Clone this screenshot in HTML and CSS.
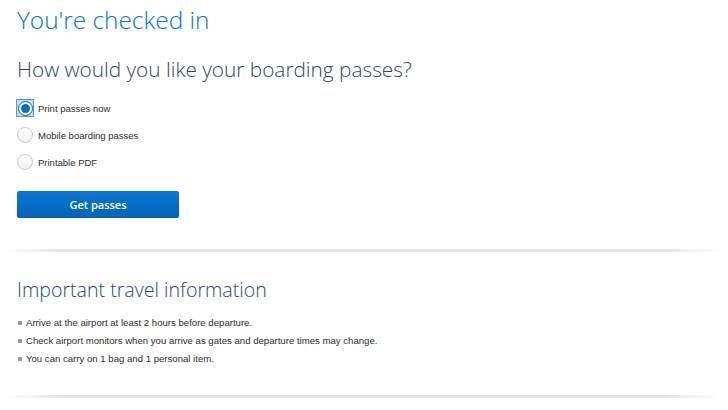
FILE: index.html
```html
<!DOCTYPE html>
<html lang="en">
<head>
<meta charset="utf-8">
<title>You're checked in</title>
<link rel="stylesheet" href="styles.css">
</head>
<body>
<main class="page">
  <section class="section">
    <h1 class="title">You're checked in</h1>
    <h2 class="subtitle">How would you like your boarding passes?</h2>
    <ul class="options">
      <li class="option"><span class="focus"><span class="radio selected"><span class="dot"></span></span></span><span class="label">Print passes now</span></li>
      <li class="option"><span class="focus"><span class="radio"></span></span><span class="label">Mobile boarding passes</span></li>
      <li class="option"><span class="focus"><span class="radio"></span></span><span class="label">Printable PDF</span></li>
    </ul>
    <button class="btn" type="button">Get passes</button>
  </section>
  <div class="divider"></div>
  <section class="section info">
    <h2 class="subtitle small">Important travel information</h2>
    <ul class="bullets">
      <li>Arrive at the airport at least 2 hours before departure.</li>
      <li>Check airport monitors when you arrive as gates and departure times may change.</li>
      <li>You can carry on 1 bag and 1 personal item.</li>
    </ul>
  </section>
  <div class="divider"></div>
  <div class="bottom-line"></div>
</main>
</body>
</html>
```

FILE: styles.css
```css
* { box-sizing: border-box; }
html, body { margin: 0; padding: 0; background: #fff; }
body { font-family: "Liberation Sans", Arial, sans-serif; color: #36495a; }
.page { padding: 0 16px 0 17px; }
.section { display: flex; flex-direction: column; align-items: flex-start; }
.title {
  margin: 0;
  padding-top: 6px;
  font-family: "Open Sans", sans-serif;
  font-weight: 300;
  font-size: 24.4px;
  line-height: 28px;
  color: #0078d2;
}
.subtitle {
  margin: 0;
  font-family: "Open Sans", sans-serif;
  font-weight: 300;
  font-size: 20.8px;
  line-height: 24px;
  color: #264a6e;
}
.subtitle.small { font-size: 19.6px; }
.section > .subtitle { margin-top: 23px; }
.options { list-style: none; margin: 19px 0 0; padding: 0; display: flex; flex-direction: column; gap: 11px; }
.option { display: flex; align-items: center; gap: 4px; height: 16px; }
.focus {
  width: 18px; height: 18px; margin-left: -1px;
  display: flex; align-items: center; justify-content: center;
  flex: none;
}
.option:first-child .focus {
  background: #c7def5;
  border: 1px solid #4f97dc;
}
.radio {
  width: 16px; height: 16px; border-radius: 50%;
  border: 1px solid #c9c9c9;
  background: linear-gradient(#ffffff, #efefef);
  display: flex; align-items: center; justify-content: center;
  flex: none;
}
.radio.selected {
  width: 15px; height: 15px;
  border: 1.5px solid #0b5fae;
  background: #fff;
}
.dot { width: 9px; height: 9px; border-radius: 50%; background: #0a6fc6; }
.label { font-size: 9.5px; color: #2d2d2d; }
.btn {
  margin-top: 21px;
  width: 162px; height: 27px;
  border: 0; border-radius: 2px;
  background: linear-gradient(#0a78d5, #0263b4);
  color: #fff;
  font-family: "Open Sans", sans-serif;
  font-size: 11px;
  font-weight: 600;
  cursor: pointer;
}
.divider {
  height: 3px;
  margin: 31px -8px 0 -12px;
  background: linear-gradient(to right, rgba(225,225,225,0) 0%, #e3e3e3 8%, #e3e3e3 92%, rgba(225,225,225,0) 100%);
}
.info .subtitle { margin-top: 26px; }
.bullets { list-style: none; margin: 12px 0 0; padding: 0; display: flex; flex-direction: column; }
.bullets li {
  font-size: 9.6px; line-height: 18px; color: #2d2d2d;
  display: flex; align-items: center; gap: 4px;
}
.bullets li::before { content: ""; width: 4px; height: 4px; background: #9a9a9a; margin-left: 1px; flex: none; }
.info + .divider { margin-top: 27px; }
.bottom-line { height: 1px; background: #f2f2f2; margin: 12px -17px 0; }
```
